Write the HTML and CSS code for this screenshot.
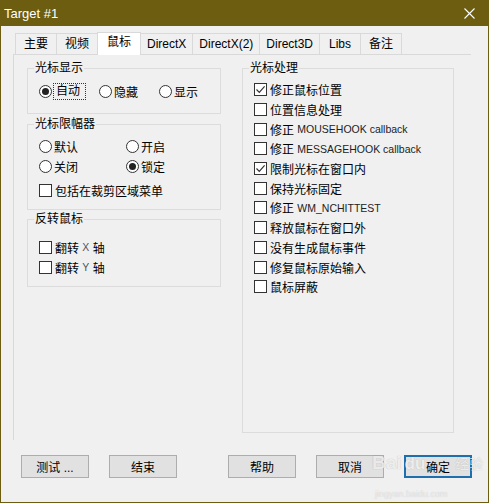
FILE: index.html
```html
<!DOCTYPE html>
<html lang="zh-CN">
<head>
    <meta charset="UTF-8">
    <title>Target #1</title>
    <link rel="stylesheet" href="styles.css">
</head>
<body>
    <div class="window">
        <div class="titlebar">
            <span class="title">Target #1</span>
            <svg class="close" width="11" height="11" viewBox="0 0 11 11">
                <path d="M0.5 0.5 L10.5 10.5 M10.5 0.5 L0.5 10.5" stroke="#fff" stroke-width="1.1" fill="none"/>
            </svg>
        </div>

        <div class="content">
            <div class="tabs">
                <div class="tab">主要</div>
                <div class="tab">视频</div>
                <div class="tab active">鼠标</div>
                <div class="tab">DirectX</div>
                <div class="tab">DirectX(2)</div>
                <div class="tab">Direct3D</div>
                <div class="tab">Libs</div>
                <div class="tab">备注</div>
            </div>

            <div class="panel">
                <div class="col-left">
                    <fieldset class="group g-show">
                        <legend>光标显示</legend>
                        <div class="grid3">
                            <div class="row"><span class="radio on"></span><span class="focus">自动</span></div>
                            <div class="row"><span class="radio"></span>隐藏</div>
                            <div class="row"><span class="radio"></span>显示</div>
                        </div>
                    </fieldset>

                    <fieldset class="group g-limit">
                        <legend>光标限幅器</legend>
                        <div class="grid2">
                            <div class="row"><span class="radio"></span>默认</div>
                            <div class="row"><span class="radio"></span>开启</div>
                            <div class="row"><span class="radio"></span>关闭</div>
                            <div class="row"><span class="radio on"></span>锁定</div>
                        </div>
                        <div class="row gap-top"><span class="check"></span>包括在裁剪区域菜单</div>
                    </fieldset>

                    <fieldset class="group g-invert">
                        <legend>反转鼠标</legend>
                        <div class="row"><span class="check"></span>翻转 <span class="en gray">X</span> 轴</div>
                        <div class="row"><span class="check"></span>翻转 <span class="en gray">Y</span> 轴</div>
                    </fieldset>
                </div>

                <fieldset class="group g-cursor">
                    <legend>光标处理</legend>
                    <div class="row tight"><span class="check on"><svg width="11" height="11" viewBox="0 0 11 11"><path d="M1.5 5.5 L4.3 8.3 L9.6 2.4" stroke="#333" stroke-width="1.2" fill="none"/></svg></span>修正鼠标位置</div>
                    <div class="row tight"><span class="check"></span>位置信息处理</div>
                    <div class="row tight"><span class="check"></span>修正 <span class="en">MOUSEHOOK callback</span></div>
                    <div class="row tight"><span class="check"></span>修正 <span class="en">MESSAGEHOOK callback</span></div>
                    <div class="row tight"><span class="check on"><svg width="11" height="11" viewBox="0 0 11 11"><path d="M1.5 5.5 L4.3 8.3 L9.6 2.4" stroke="#333" stroke-width="1.2" fill="none"/></svg></span>限制光标在窗口内</div>
                    <div class="row tight"><span class="check"></span>保持光标固定</div>
                    <div class="row tight"><span class="check"></span>修正 <span class="en">WM_NCHITTEST</span></div>
                    <div class="row tight"><span class="check"></span>释放鼠标在窗口外</div>
                    <div class="row tight"><span class="check"></span>没有生成鼠标事件</div>
                    <div class="row tight"><span class="check"></span>修复鼠标原始输入</div>
                    <div class="row tight"><span class="check"></span>鼠标屏蔽</div>
                </fieldset>
            </div>

            <div class="buttons">
                <button class="btn">测试 ...</button>
                <button class="btn">结束</button>
                <button class="btn push">帮助</button>
                <button class="btn">取消</button>
                <button class="btn default">确定</button>
            </div>
        </div>

        <div class="watermark">
            <span class="wm-bai">Bai</span><span class="wm-du">du</span><span class="wm-jy">经验</span>
        </div>
        <div class="wm-url">jingyan.baidu.com</div>
    </div>
</body>
</html>
```

FILE: styles.css
```css
body {
    margin: 0;
    padding: 0;
    font-family: "Liberation Sans", "Noto Sans CJK SC", sans-serif;
    font-size: 12px;
    color: #000;
    background-color: #f0f0f0;
}
.window {
    position: relative;
    width: 489px;
    height: 503px;
    box-sizing: border-box;
    border: 1px solid #6c5d10;
    border-top: none;
    background-color: #f0f0f0;
    overflow: hidden;
}
.titlebar {
    height: 26px;
    background-color: #6c5d10;
    color: #fff;
    display: flex;
    align-items: center;
    justify-content: space-between;
    padding: 0 13px 0 3px;
}
.title {
    font-size: 13px;
}
.close {
    display: block;
    margin-top: 1px;
}
.content {
    padding: 6px 0 0 12px;
}

/* tabs */
.tabs {
    display: flex;
    align-items: flex-end;
    height: 22px;
    margin-left: 2px;
}
.tab {
    height: 20px;
    line-height: 20px;
    min-width: 28px;
    padding: 0 6px;
    text-align: center;
    border: 1px solid #d9d9d9;
    border-bottom: none;
    background-color: #f0f0f0;
}
.tab + .tab {
    margin-left: -1px;
}
.tab.active {
    position: relative;
    z-index: 1;
    height: 22px;
    line-height: 19px;
    margin-bottom: -1px;
    padding: 0 7px;
    background-color: #fff;
}

/* panel */
.panel {
    display: flex;
    align-items: stretch;
    gap: 21px;
    width: 458px;
    height: 386px;
    box-sizing: border-box;
    border-top: 1px solid #d9d9d9;
    border-left: 1px solid #d9d9d9;
    padding: 5px 17px 7px 13px;
}
.col-left {
    width: 194px;
    align-self: flex-start;
}
.group {
    margin: 0;
    min-width: 0;
    border: 1px solid #dcdcdc;
    padding: 0 0 0 11px;
}
.group legend {
    margin-left: -5px;
    padding: 0 1px;
    line-height: 16px;
}
.g-show {
    padding-top: 5px;
    padding-bottom: 12px;
}
.g-limit {
    margin-top: 2px;
    padding-top: 4px;
    padding-bottom: 9px;
}
.g-invert {
    margin-top: 1px;
    padding-top: 10px;
    padding-bottom: 9px;
}
.g-cursor {
    flex: 1;
    padding-top: 4px;
}
.grid3 {
    display: grid;
    grid-template-columns: 60px 60px auto;
}
.grid2 {
    display: grid;
    grid-template-columns: 87px auto;
}
.row {
    height: 20px;
    display: flex;
    align-items: center;
    white-space: pre;
}
.row.tight {
    height: 19.7px;
}
.gap-top {
    margin-top: 4px;
}
.en {
    font-size: 10.5px;
    color: #222;
}
.en.gray {
    color: #555;
}

/* controls */
.radio {
    width: 11px;
    height: 11px;
    border: 1px solid #333;
    border-radius: 50%;
    background-color: #fff;
    margin-right: 2px;
    display: flex;
    align-items: center;
    justify-content: center;
}
.radio.on::after {
    content: "";
    width: 7px;
    height: 7px;
    border-radius: 50%;
    background-color: #222;
}
.check {
    width: 11px;
    height: 11px;
    border: 1px solid #333;
    background-color: #fff;
    margin-right: 3px;
    display: flex;
    align-items: center;
    justify-content: center;
}
.focus {
    outline: 1px dotted #333;
    padding: 0 5px 0 2px;
    line-height: 15px;
}

/* buttons */
.buttons {
    display: flex;
    gap: 20px;
    margin: 15px 0 0 8px;
}
.btn {
    width: 68px;
    height: 23px;
    box-sizing: border-box;
    border: 1px solid #adadad;
    background-color: #e1e1e1;
    font-family: "Liberation Sans", "Noto Sans CJK SC", sans-serif;
    font-size: 12px;
    color: #000;
    padding: 0;
}
.btn.push {
    margin-left: 31px;
}
.btn.default {
    border: 2px solid #1d6fae;
}

/* watermark of the screenshot source */
.watermark {
    position: absolute;
    left: 371px;
    top: 452px;
    color: rgba(255, 255, 255, 0.75);
    text-shadow: 0 0 1px rgba(0, 0, 0, 0.25);
    pointer-events: none;
}
.wm-bai {
    font-size: 19px;
    font-weight: bold;
}
.wm-du {
    font-size: 17px;
    font-weight: bold;
    color: rgba(255, 255, 255, 0.8);
    margin-left: 3px;
}
.wm-jy {
    font-size: 14px;
    margin-left: 30px;
}
.wm-url {
    position: absolute;
    left: 374px;
    top: 489px;
    font-size: 9px;
    color: rgba(255, 255, 255, 0.6);
    text-shadow: 0 0 1px rgba(0, 0, 0, 0.2);
    pointer-events: none;
}
```
